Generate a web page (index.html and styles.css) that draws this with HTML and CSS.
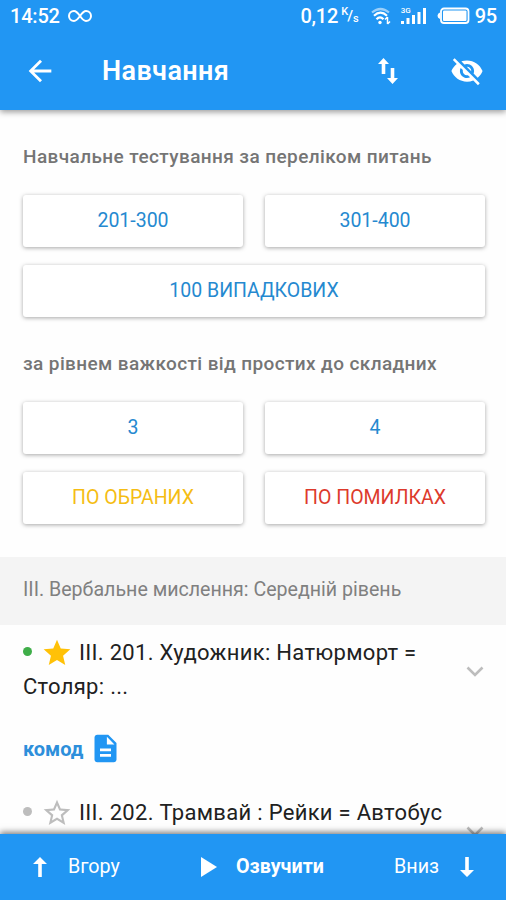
FILE: index.html
```html
<!DOCTYPE html>
<html lang="uk">
<head>
    <meta charset="UTF-8">
    <meta name="viewport" content="width=device-width, initial-scale=1.0">
    <title>Навчання</title>
    <link rel="stylesheet" href="styles.css">
</head>
<body>
    <header>
        <div class="status-bar">
            <span class="time">14:52</span>
            <svg class="infinity" width="24" height="14" viewBox="0 0 24 14"><path d="M12 7C9.600 3.600 8.300 2 6 2a5 5 0 0 0 0 10c2.300 0 3.600-1.600 6-5s3.700-5 6-5a5 5 0 0 1 0 10c-2.300 0-3.600-1.600-6-5z" fill="none" stroke="#fff" stroke-width="2"/></svg>
            <span class="speed">0,12</span>
            <span class="unit"><sup>K</sup>/<sub>s</sub></span>
            <svg class="wifi" width="20" height="18" viewBox="0 0 20 18" fill="none" stroke="#fff" stroke-width="2.200">
                <path d="M1 5.500Q9.500-1.500 18 5.500" opacity=".55"/>
                <path d="M3 8.700Q9.500 2.500 16 8.700M5.500 12.200Q9 8.500 12.500 12.200"/>
                <circle cx="9" cy="15.500" r="1.700" fill="#fff" stroke="none"/>
                <path d="M16.500 10v7M14 12.500l2.500-2.500M16.500 17l2.500-2.500" stroke-width="1.500"/>
            </svg>
            <div class="signal">
                <small>3G</small>
                <svg width="27" height="18" viewBox="0 0 27 18" fill="#fff"><path d="M1 14h3v3H1zM6.500 11h3v6h-3zM12 8h3v9h-3zM17.500 5h3v12h-3zM23 1h3v16h-3z"/></svg>
            </div>
            <svg class="battery" width="33" height="18" viewBox="0 0 33 18"><rect x="4" y="1.500" width="27.500" height="14.500" rx="3" fill="none" stroke="#fff" stroke-width="1.800"/><path d="M3 5.500Q.5 6.500.5 8.800T3 12z" fill="#fff"/><rect x="6" y="3.500" width="23.500" height="10.500" rx="1" fill="#fff"/></svg>
            <span class="percent">95</span>
        </div>
        <div class="toolbar">
            <svg width="34" height="34" viewBox="0 0 24 24" fill="#fff"><path d="M20 11H7.830l5.590-5.590L12 4l-8 8 8 8 1.410-1.410L7.830 13H20z"/></svg>
            <h1>Навчання</h1>
            <svg class="swap" width="20" height="26" viewBox="0 0 20 26" fill="#fff"><path d="M5.500 0L11 6H7.300v10H3.700V6H0zM12.700 10h3.600v10H20l-5.500 6L9 20h3.700z"/></svg>
            <svg width="34" height="34" viewBox="0 0 24 24" fill="#fff"><path d="M12 7c2.760 0 5 2.240 5 5 0 .65-.13 1.260-.36 1.830l2.920 2.920c1.510-1.260 2.700-2.890 3.430-4.750-1.730-4.390-6-7.500-11-7.500-1.400 0-2.740.25-3.980.7l2.160 2.160C10.740 7.130 11.350 7 12 7zM2 4.270l2.280 2.280.46.46C3.080 8.300 1.780 10.020 1 12c1.730 4.390 6 7.500 11 7.500 1.550 0 3.030-.3 4.380-.84l.42.42L19.730 22 21 20.730 3.270 3 2 4.270zM7.530 9.800l1.550 1.550c-.05.21-.08.43-.08.65 0 1.660 1.340 3 3 3 .22 0 .44-.03.65-.08l1.550 1.550c-.67.33-1.410.53-2.200.53-2.760 0-5-2.240-5-5 0-.79.2-1.530.53-2.200zm4.310-.78l3.150 3.150.02-.16c0-1.660-1.340-3-3-3l-.17.01z"/></svg>
        </div>
    </header>

    <main>
        <section class="filters">
            <h2 class="by-list">Навчальне тестування за переліком питань</h2>
            <div class="buttons">
                <button>201-300</button>
                <button>301-400</button>
                <button class="wide">100 ВИПАДКОВИХ</button>
            </div>
            <h2 class="by-level">за рівнем важкості від простих до складних</h2>
            <div class="buttons">
                <button>3</button>
                <button>4</button>
                <button class="favorite">ПО ОБРАНИХ</button>
                <button class="mistakes">ПО ПОМИЛКАХ</button>
            </div>
        </section>

        <h3>III. Вербальне мислення: Середній рівень</h3>

        <article>
            <div class="question">
                <div class="line">
                    <i class="dot done"></i>
                    <svg width="32" height="32" viewBox="0 0 24 24" fill="#ffc107"><path d="M12 17.270L18.180 21l-1.640-7.030L22 9.240l-7.190-.61L12 2 9.190 8.630 2 9.240l5.460 4.730L5.820 21z"/></svg>
                    <span>III. 201. Художник: Натюрморт =</span>
                </div>
                <div class="line"><span>Столяр: ...</span></div>
            </div>
            <svg class="chevron" width="18" height="12" viewBox="0 0 18 12"><path d="M1.500 1.500L9 9l7.500-7.500" fill="none" stroke="#bdbdbd" stroke-width="2.600"/></svg>
        </article>
        <div class="answer">
            <b>комод</b>
            <svg width="33" height="33" viewBox="0 0 24 24" fill="#2196f3"><path d="M14 2H6c-1.100 0-1.990.9-1.990 2L4 20c0 1.100.89 2 1.990 2H18c1.100 0 2-.9 2-2V8l-6-6zm2 16H8v-2h8v2zm0-4H8v-2h8v2zm-3-5V3.500L18.500 9H13z"/></svg>
        </div>
        <article>
            <div class="question">
                <div class="line">
                    <i class="dot"></i>
                    <svg width="32" height="32" viewBox="0 0 24 24" fill="#bdbdbd"><path d="M22 9.240l-7.190-.62L12 2 9.190 8.630 2 9.240l5.460 4.730L5.820 21 12 17.270 18.180 21l-1.630-7.030L22 9.240zM12 15.400l-3.760 2.270 1-4.280-3.320-2.880 4.380-.38L12 6.100l1.710 4.040 4.380.38-3.320 2.880 1 4.280L12 15.400z"/></svg>
                    <span>III. 202. Трамвай : Рейки = Автобус</span>
                </div>
            </div>
            <svg class="chevron" width="18" height="12" viewBox="0 0 18 12"><path d="M1.500 1.500L9 9l7.500-7.500" fill="none" stroke="#bdbdbd" stroke-width="2.600"/></svg>
        </article>
    </main>

    <footer>
        <svg width="14" height="20" viewBox="0 0 14 20" fill="#fff"><path d="M7 0l7 7H8.800v13H5.200V7H0z"/></svg>
        <span class="up">Вгору</span>
        <svg class="play" width="16" height="20" viewBox="0 0 16 20" fill="#fff"><path d="M0 0l16 10L0 20z"/></svg>
        <b>Озвучити</b>
        <span class="down">Вниз</span>
        <svg class="arrow-down" width="14" height="20" viewBox="0 0 14 20" fill="#fff"><path d="M7 20l7-7H8.800V0H5.200v13H0z"/></svg>
    </footer>
</body>
</html>
```
FILE: styles.css
```css
* {
    box-sizing: border-box;
}
body {
    margin: 0;
    height: 900px;
    display: flex;
    flex-direction: column;
    overflow: hidden;
    font-family: Roboto, sans-serif;
    background-color: #fefefe;
    white-space: nowrap;
}
svg {
    display: block;
    flex: none;
}
header {
    height: 110px;
    flex: none;
    background-color: #2196f3;
    color: white;
    box-shadow: 0 2px 6px rgba(0,0,0,0.4);
    z-index: 1;
}
.status-bar {
    height: 32px;
    padding: 0 9px 0 10px;
    display: flex;
    align-items: center;
    font-size: 20px;
    font-weight: 500;
}
.time {
    letter-spacing: -0.2px;
}
.infinity {
    margin-left: 8px;
}
.speed {
    margin-left: auto;
    letter-spacing: -0.2px;
}
.unit {
    display: flex;
    align-items: center;
    margin-left: 3px;
    font-size: 15px;
    line-height: 18px;
}
.unit sup, .unit sub {
    font-size: 11px;
    line-height: 10px;
    vertical-align: baseline;
}
.unit sup {
    margin-top: -8px;
    margin-right: -1px;
}
.unit sub {
    margin-top: 6px;
}
.wifi {
    margin-left: 12px;
}
.signal {
    position: relative;
    margin-left: 9px;
}
.signal small {
    position: absolute;
    left: 1px;
    top: 0;
    font-size: 8px;
    line-height: 8px;
}
.battery {
    margin-left: 10px;
}
.percent {
    margin-left: 5px;
    letter-spacing: -0.2px;
}
.toolbar {
    height: 78px;
    padding: 0 22px 0 23px;
    display: flex;
    align-items: center;
}
h1 {
    margin: 0 auto 0 45px;
    font-size: 27px;
    font-weight: 600;
    letter-spacing: 0.4px;
}
.swap {
    margin-right: 52px;
}
main {
    flex: 1;
    min-height: 0;
    overflow: hidden;
}
.filters {
    height: 447px;
    padding: 34px 21px 0 23px;
}
h2 {
    margin: 0;
    font-size: 19px;
    font-weight: 500;
    line-height: 26px;
    letter-spacing: 0.4px;
    color: #757575;
}
.buttons {
    display: grid;
    grid-template-columns: 1fr 1fr;
    gap: 18px 22px;
    margin-top: 25px;
}
.by-level {
    margin-top: 34px;
    letter-spacing: 0.38px;
}
button {
    height: 52px;
    padding: 0 0 1px;
    border: none;
    border-radius: 3px;
    background-color: white;
    box-shadow: 0 1px 4px rgba(0,0,0,0.35);
    color: #2589d0;
    font-family: inherit;
    font-size: 19.5px;
}
.wide {
    grid-column: span 2;
}
.favorite {
    color: #f5bd14;
}
.mistakes {
    color: #dd3a2c;
}
h3 {
    height: 68px;
    margin: 0;
    padding-left: 23px;
    background-color: #f4f4f4;
    color: #808080;
    font-size: 19.6px;
    font-weight: 400;
    line-height: 66px;
}
article {
    display: flex;
    padding: 11px 22px 0 23px;
}
.question {
    flex: 1;
    font-size: 22px;
    letter-spacing: 0.3px;
    color: #212121;
}
.line {
    display: flex;
    align-items: center;
    height: 34px;
}
.line svg {
    margin: 0 6px 0 9px;
}
.line span {
    padding-bottom: 2px;
}
.dot {
    width: 9px;
    height: 9px;
    margin-bottom: 3px;
    border-radius: 50%;
    background-color: #bdbdbd;
}
.dot.done {
    background-color: #3fae49;
}
.chevron {
    margin-top: 30px;
}
.answer {
    display: flex;
    align-items: center;
    height: 81px;
    padding: 8px 0 0 23px;
    color: #2d8fdb;
    font-size: 20px;
}
.answer svg {
    margin-left: 5px;
}
footer {
    height: 66px;
    flex: none;
    display: flex;
    align-items: center;
    padding: 0 32px 1px 33px;
    background-color: #2196f3;
    color: white;
    font-size: 19.7px;
    box-shadow: 0 -2px 6px rgba(0,0,0,0.5);
    z-index: 1;
}
.up {
    width: 133px;
    margin-left: 21px;
}
footer b {
    margin-left: 19px;
}
.down {
    margin-left: auto;
}
.arrow-down {
    margin-left: 21px;
}
```
